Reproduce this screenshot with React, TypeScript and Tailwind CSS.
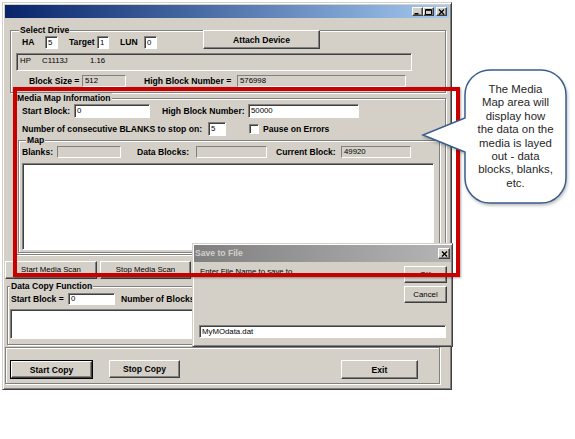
import clsx from 'clsx'
import type { ReactNode } from 'react'

const bold = 'text-[8.6px] font-bold leading-[12px] whitespace-nowrap'
const norm = 'text-[7.8px] leading-[12px] whitespace-nowrap'

const raised =
  'border border-t-white border-l-white border-r-[#404040] border-b-[#404040] bg-[#d4d0c8] shadow-[inset_-1px_-1px_0_#808080]'
const sunken =
  'border border-t-[#808080] border-l-[#808080] border-r-white border-b-white shadow-[inset_1px_1px_0_#404040]'

const Group = ({ label, className, labelClass, children }: { label?: string; className?: string; labelClass?: string; children?: ReactNode }) => (
  <div className={clsx('shrink-0 border border-[#808080] shadow-[1px_1px_0_#fff,inset_1px_1px_0_#fff]', className)}>
    {label && (
      <div className={clsx('-mt-[6px] h-[11px] w-fit bg-[#d4d0c8] px-[1px] text-[8.6px] font-bold leading-[11px]', labelClass)}>
        {label}
      </div>
    )}
    {children}
  </div>
)

const Field = ({ value = '', className, gray }: { value?: string; className?: string; gray?: boolean }) => (
  <div
    className={clsx(
      'flex shrink-0 items-center pl-[2px] text-[7.8px] leading-none',
      gray ? 'border border-t-[#808080] border-l-[#808080] border-r-white border-b-white bg-[#d4d0c8]' : clsx(sunken, 'bg-white'),
      className
    )}
  >
    {value}
  </div>
)

const Btn = ({ children, className, isDefault }: { children: ReactNode; className?: string; isDefault?: boolean }) =>
  isDefault ? (
    <div className={clsx('shrink-0 border border-black', className)}>
      <div className={clsx('flex h-full w-full items-center justify-center', raised)}>{children}</div>
    </div>
  ) : (
    <div className={clsx('flex shrink-0 items-center justify-center', raised, className)}>{children}</div>
  )

const CaptionBtn = ({ kind }: { kind: 'min' | 'max' | 'close' }) => (
  <div className={clsx('flex h-[9px] w-[11px] items-center justify-center', raised)}>
    <svg width="7" height="6" viewBox="0 0 7 6">
      {kind === 'min' && <rect x="0.5" y="4" width="4" height="1.5" fill="#000" />}
      {kind === 'max' && <path d="M0.5 0.5h6v5h-6z M0.5 1.3h6" fill="none" stroke="#000" strokeWidth="1" />}
      {kind === 'close' && <path d="M1 0.5l5 5M6 0.5l-5 5" stroke="#000" strokeWidth="1.3" />}
    </svg>
  </div>
)

const calloutLines = ['The Media', 'Map area will', 'display how', 'the data on the', 'media is layed', 'out - data', 'blocks, blanks,', 'etc.']

export default function App() {
  return (
    <div className="relative h-[439px] w-[575px] overflow-hidden bg-white font-['Liberation_Sans',Arial,sans-serif] text-black">
      {/* main window */}
      <div className="ml-[2px] mt-[2px] flex h-[388px] w-[450px] flex-col border border-t-[#d4d0c8] border-l-[#d4d0c8] border-r-[#404040] border-b-[#404040] bg-[#d4d0c8] p-[2px] shadow-[inset_1px_1px_0_#fff,inset_-1px_-1px_0_#808080]">
        <div className="flex h-[13px] shrink-0 items-center justify-end bg-linear-to-r from-[#0a246a] to-[#a6caf0] pr-[2px]">
          <CaptionBtn kind="min" />
          <CaptionBtn kind="max" />
          <div className="ml-[2px]">
            <CaptionBtn kind="close" />
          </div>
        </div>

        {/* Select Drive */}
        <Group label="Select Drive" className="ml-[5px] mt-[12px] h-[63px] w-[436px]" labelClass="ml-[8px]">
          <div className="-mt-[6px] flex h-[19px] items-end">
            <span className={clsx(bold, 'ml-[11px] w-[23px] leading-[13px]')}>HA</span>
            <Field value="5" className="h-[13px] w-[13px]" />
            <span className={clsx(bold, 'ml-[11px] w-[28px] leading-[13px]')}>Target</span>
            <Field value="1" className="h-[13px] w-[12px]" />
            <span className={clsx(bold, 'ml-[11px] w-[24px] leading-[13px]')}>LUN</span>
            <Field value="0" className="h-[13px] w-[13px]" />
            <Btn className={clsx(bold, 'ml-[46px] h-[19px] w-[117px] self-start')}>Attach Device</Btn>
          </div>
          <div className={clsx('ml-[5px] mt-[4px] flex h-[18px] w-[396px] items-start bg-[#d4d0c8] pl-[3px] pt-[1px]', sunken)}>
            <span className={clsx(norm, 'w-[22px]')}>HP</span>
            <span className={clsx(norm, 'w-[48px]')}>C1113J</span>
            <span className={norm}>1.16</span>
          </div>
          <div className="mt-[4px] flex h-[12px] items-center">
            <span className={clsx(bold, 'ml-[18px] w-[53px]')}>Block Size =</span>
            <Field gray value="512" className="h-[12px] w-[44px]" />
            <span className={clsx(bold, 'ml-[18px] w-[93px]')}>High Block Number =</span>
            <Field gray value="576998" className="h-[12px] w-[169px]" />
          </div>
        </Group>

        {/* Media Map Information */}
        <Group label="Media Map Information" className="ml-[10px] mt-[5px] h-[157px] w-[431px]">
          <div className="flex h-[14px] items-center">
            <span className={clsx(bold, 'ml-[6px] w-[52px]')}>Start Block:</span>
            <Field value="0" className="h-[14px] w-[76px]" />
            <span className={clsx(bold, 'ml-[12px] w-[86px]')}>High Block Number:</span>
            <Field value="50000" className="h-[14px] w-[111px]" />
          </div>
          <div className="mt-[4px] flex h-[14px] items-center">
            <span className={clsx(bold, 'ml-[6px] w-[186px]')}>Number of consecutive BLANKS to stop on:</span>
            <Field value="5" className="h-[14px] w-[18px]" />
            <div className={clsx('ml-[23px] h-[10px] w-[10px] bg-white', sunken)} />
            <span className={clsx(bold, 'ml-[4px]')}>Pause on Errors</span>
          </div>
          <Group label="Map" className="ml-[2px] mt-[4px] h-[113px] w-[422px]" labelClass="ml-[7px]">
            <div className="flex h-[12px] items-center">
              <span className={clsx(bold, 'ml-[3px] w-[35px]')}>Blanks:</span>
              <Field gray className="h-[12px] w-[64px]" />
              <span className={clsx(bold, 'ml-[16px] w-[59px]')}>Data Blocks:</span>
              <Field gray className="h-[12px] w-[71px]" />
              <span className={clsx(bold, 'ml-[9px] w-[65px]')}>Current Block:</span>
              <Field gray value="49920" className="h-[12px] w-[70px]" />
            </div>
            <div className={clsx('ml-[3px] mt-[5px] h-[87px] w-[412px] bg-white', sunken)} />
          </Group>
        </Group>

        <div className="mt-[6px] flex gap-[3px]">
          <Btn className={clsx(norm, 'h-[18px] w-[92px]')}>Start Media Scan</Btn>
          <Btn className={clsx(norm, 'h-[18px] w-[91px]')}>Stop Media Scan</Btn>
        </div>

        {/* Data Copy Function */}
        <Group label="Data Copy Function" className="ml-[2px] mt-[7px] h-[59px] w-[439px]" labelClass="ml-[2px]">
          <div className="mt-[1px] flex h-[12px] items-center">
            <span className={clsx(bold, 'ml-[3px] w-[57px]')}>Start Block =</span>
            <Field value="0" className="h-[12px] w-[47px]" />
            <span className={clsx(bold, 'ml-[6px]')}>Number of Blocks:</span>
          </div>
          <div className={clsx('ml-[2px] mt-[4px] h-[30px] w-[433px] bg-white', sunken)} />
        </Group>

        <Group className="mt-[2px] h-[37px] w-[435px]">
          <div className="mt-[12px] flex items-start">
            <Btn isDefault className={clsx(bold, 'ml-[4px] h-[19px] w-[83px]')}>Start Copy</Btn>
            <Btn className={clsx(bold, 'ml-[16px] h-[18px] w-[71px]')}>Stop Copy</Btn>
            <Btn className={clsx(bold, 'ml-[161px] h-[19px] w-[77px]')}>Exit</Btn>
          </div>
        </Group>
      </div>

      {/* Save to File dialog */}
      <div className="absolute left-[192px] top-[243px] flex h-[104px] w-[261px] flex-col border border-t-[#d4d0c8] border-l-[#d4d0c8] border-r-[#404040] border-b-[#404040] bg-[#d4d0c8] p-[1px] shadow-[inset_1px_1px_0_#fff,inset_-1px_-1px_0_#808080]">
        <div className="flex h-[17px] shrink-0 items-center justify-between bg-linear-to-r from-[#808080] to-[#b5b5b5] pl-[1px] pr-[1px]">
          <span className="text-[8.6px] font-bold text-[#d4d0c8]">Save to File</span>
          <div className={clsx('flex h-[11px] w-[12px] items-center justify-center', raised)}>
            <svg width="7" height="6" viewBox="0 0 7 6">
              <path d="M1 0.5l5 5M6 0.5l-5 5" stroke="#000" strokeWidth="1.4" />
            </svg>
          </div>
        </div>
        <div className="flex">
          <span className={clsx(norm, 'ml-[6px] mt-[4px]')}>Enter File Name to save to</span>
          <div className="ml-auto mr-[4px] mt-[4px] flex flex-col gap-[3px]">
            <Btn className={clsx(norm, 'h-[17px] w-[43px]')}>OK</Btn>
            <Btn className={clsx(norm, 'h-[17px] w-[43px]')}>Cancel</Btn>
          </div>
        </div>
        <Field value="MyMOdata.dat" className="ml-[5px] mt-[22px] h-[13px] w-[247px]" />
      </div>

      {/* red highlight */}
      <div className="pointer-events-none absolute left-[13px] top-[87px] h-[190px] w-[447px] border-4 border-[#c80000] shadow-[1px_1px_2px_rgba(0,0,0,0.35)]" />

      {/* callout */}
      <svg className="absolute left-[420px] top-[66px] drop-shadow-[1px_2px_1.5px_rgba(0,0,0,0.25)]" width="152" height="142" viewBox="0 0 152 142">
        <path
          d="M70 4H121A25 25 0 0 1 146 29V112A25 25 0 0 1 121 137H70A25 25 0 0 1 45 112V86L3 69L45 52V29A25 25 0 0 1 70 4Z"
          fill="#fff"
          stroke="#3b5d8d"
          strokeWidth="1.5"
        />
      </svg>
      <div className="absolute left-[465px] top-[83px] w-[101px] text-center text-[11.4px] leading-[13.4px] text-[#262626]">
        {calloutLines.map((l) => (
          <div key={l} className="whitespace-nowrap">
            {l}
          </div>
        ))}
      </div>
    </div>
  )
}
